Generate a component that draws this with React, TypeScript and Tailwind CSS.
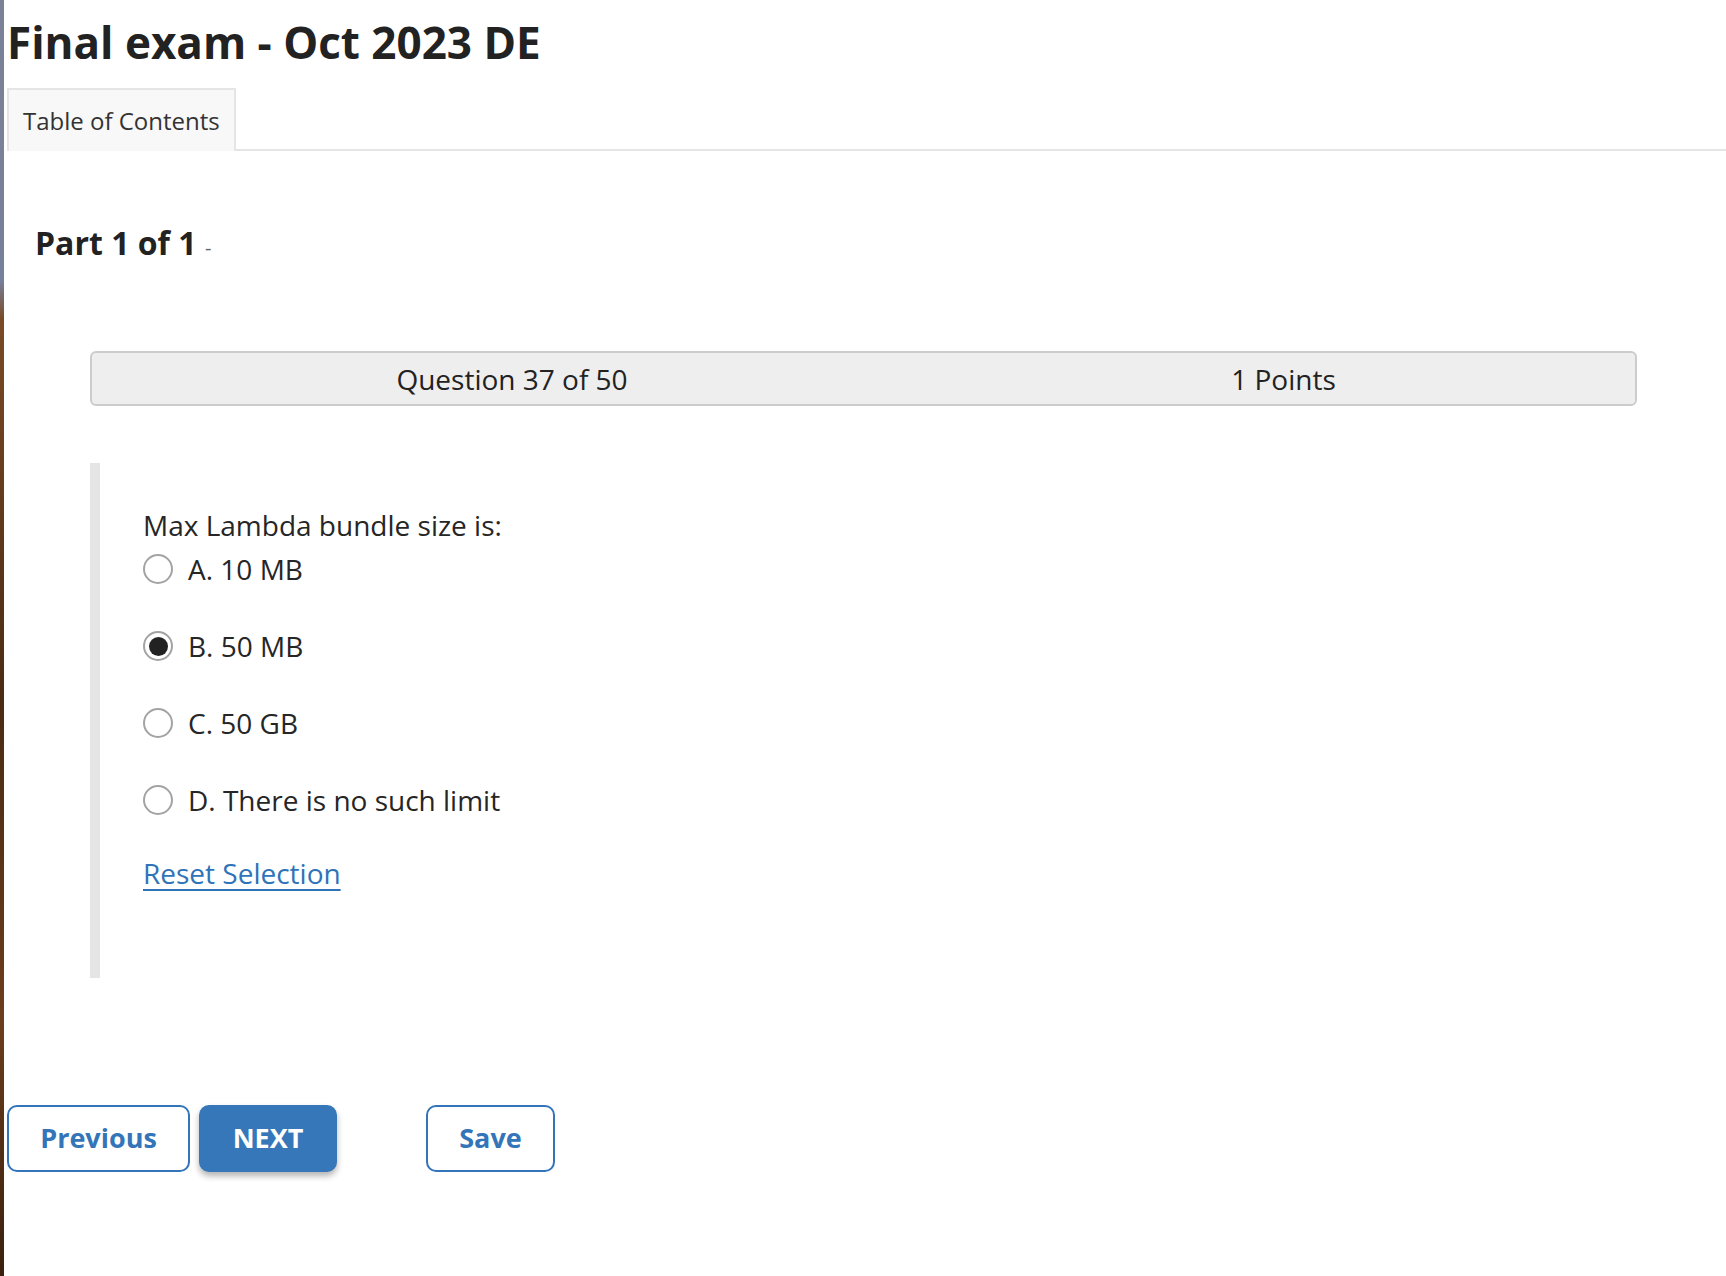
import React from "react";

const options = [
  { id: "a", label: "A. 10 MB" },
  { id: "b", label: "B. 50 MB" },
  { id: "c", label: "C. 50 GB" },
  { id: "d", label: "D. There is no such limit" },
];

const Radio: React.FC<{ checked: boolean }> = ({ checked }) => (
  <span className="flex h-[30px] w-[30px] shrink-0 items-center justify-center rounded-full border-2 border-[#a3a3a3] bg-white">
    {checked && <span className="h-[19px] w-[19px] rounded-full bg-[#222222]" />}
  </span>
);

const App: React.FC = () => {
  const [selected, setSelected] = React.useState<string | null>("b");

  return (
    <div className="flex min-h-screen bg-white font-['Open_Sans',sans-serif] text-[#262626]">
      {/* desktop peeking through on the left edge */}
      <div className="w-[4px] shrink-0 bg-[linear-gradient(to_bottom,#7b8296_0%,#77809a_22%,#7a4a26_25%,#4b2a12_55%,#6b3d1c_80%,#3a200d_100%)]" />

      <div className="flex-1 pl-[3px]">
        <h1 className="mt-[12px] text-[44px] font-bold leading-[60px] text-[#222222]">
          Final exam - Oct 2023 DE
        </h1>

        <div className="mt-[16px] flex border-b-2 border-[#e5e5e5]">
          <div className="-mb-[2px] border-x-2 border-t-2 border-[#e5e5e5] bg-[#f8f8f8] px-[14px] py-[14px] text-[24px] leading-[33px] text-[#333333]">
            Table of Contents
          </div>
        </div>

        <div className="mt-[70px] pl-[28px]">
          <h2 className="text-[32px] font-bold leading-[44px] text-[#222222]">
            Part 1 of 1{" "}
            <span className="text-[20px] font-normal text-[#666666]">-</span>
          </h2>
        </div>

        <div className="ml-[83px] mr-[89px] mt-[81px]">
          <div className="grid h-[55px] grid-cols-[840px_1fr] items-center rounded-md border-2 border-[#cccccc] bg-[#eeeeee] text-[28px] leading-[38px] text-[#222222]">
            <div className="text-center">Question 37 of 50</div>
            <div className="text-center">1 Points</div>
          </div>

          <div className="mt-[57px] border-l-[10px] border-[#e5e5e5] pb-[86px] pl-[43px] pt-[43px] text-[28px] leading-[38px]">
            <p>Max Lambda bundle size is:</p>
            <div className="mt-px flex flex-col gap-[29px]">
              {options.map((opt) => (
                <label
                  key={opt.id}
                  className="flex h-[48px] cursor-pointer items-center gap-[15px]"
                  onClick={() => setSelected(opt.id)}
                >
                  <Radio checked={selected === opt.id} />
                  <span>{opt.label}</span>
                </label>
              ))}
            </div>
            <button
              className="mt-[30px] block text-[28px] leading-[38px] text-[#2f73b8] underline underline-offset-[5px]"
              onClick={() => setSelected(null)}
            >
              Reset Selection
            </button>
          </div>
        </div>

        <div className="mt-[127px] flex items-start">
          <button className="h-[67px] w-[183px] rounded-[10px] border-2 border-[#3375b8] bg-white text-[27px] font-bold text-[#3375b8]">
            Previous
          </button>
          <button className="ml-[9px] h-[67px] w-[138px] rounded-[10px] bg-[#3577b9] text-[27px] font-bold text-white shadow-[0_4px_6px_rgba(0,0,0,0.3)]">
            NEXT
          </button>
          <button className="ml-[89px] h-[67px] w-[129px] rounded-[10px] border-2 border-[#3375b8] bg-white text-[27px] font-bold text-[#3375b8]">
            Save
          </button>
        </div>
      </div>
    </div>
  );
};

export default App;
